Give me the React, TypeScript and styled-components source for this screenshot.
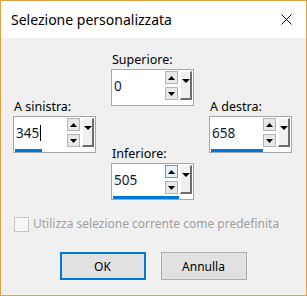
import React from "react";
import styled, { createGlobalStyle } from "styled-components";

const Global = createGlobalStyle`
  html, body { margin: 0; padding: 0; background: #ffffff; }
  body { font-family: "Noto Sans", "Open Sans", sans-serif; }
  * { box-sizing: border-box; }
`;

const Window = styled.div`
  width: 307px;
  height: 296px;
  border: 1px solid #e5a13f;
  display: flex;
  flex-direction: column;
  background: #f0f0f0;
`;

const TitleBar = styled.div`
  height: 37px;
  flex: none;
  background: #ffffff;
  display: flex;
  align-items: center;
  justify-content: space-between;
  padding: 0 14px 0 10px;
`;

const Title = styled.div`
  font-size: 14px;
  color: #000000;
  line-height: 18px;
`;

const CloseIcon = styled.svg`
  width: 11px;
  height: 11px;
  display: block;
`;

const Body = styled.div`
  flex: 1;
  display: flex;
  flex-direction: column;
  padding: 14px 12px 0 12px;
`;

const FieldsArea = styled.div`
  display: grid;
  grid-template-columns: 83px 83px 83px;
  column-gap: 15px;
  align-items: center;
`;

const CenterColumn = styled.div`
  display: flex;
  flex-direction: column;
  gap: 40px;
`;

const Field = styled.div`
  display: flex;
  flex-direction: column;
  gap: 1px;
`;

const Label = styled.div`
  font-size: 12.5px;
  line-height: 16px;
  color: #000000;
  padding-left: 1px;
`;

const SpinBox = styled.div`
  width: 83px;
  height: 37px;
  border: 1px solid #a8a8a8;
  background: #ffffff;
  display: flex;
  flex-direction: column;
  padding: 1px 1px 0 0;
`;

const InputRow = styled.div`
  height: 29px;
  display: flex;
  align-items: stretch;
`;

const Value = styled.div`
  flex: 1;
  display: flex;
  align-items: center;
  padding-left: 2px;
  font-size: 13.5px;
  color: #0f1a33;
  padding-top: 1px;
`;

const Caret = styled.span`
  display: inline-block;
  width: 1px;
  height: 16px;
  background: #000000;
  margin-left: 1px;
`;

const SpinColumn = styled.div`
  width: 13px;
  display: flex;
  flex-direction: column;
  gap: 3px;
  margin-right: 2px;
`;

const SpinButton = styled.div<{ $hover?: boolean }>`
  height: 13px;
  border: 1px solid ${(p) => (p.$hover ? "#5a9fd6" : "#b4b4b4")};
  background: ${(p) => (p.$hover ? "#e5f1fb" : "#e8e8e8")};
  display: flex;
  align-items: center;
  justify-content: center;
`;

const DropButton = styled.div`
  width: 12px;
  background: #f0f0f0;
  border-top: 1px solid #ffffff;
  border-left: 1px solid #ffffff;
  border-right: 2px solid #6d6d6d;
  border-bottom: 2px solid #6d6d6d;
  display: flex;
  justify-content: center;
  padding-top: 7px;
`;

const Bar = styled.div`
  height: 3px;
  margin: 2px 0 0 1px;
  background: #0078d7;
`;

const CheckRow = styled.div`
  display: flex;
  align-items: center;
  gap: 4px;
  margin-top: 16px;
  padding-left: 1px;
`;

const CheckBox = styled.div`
  width: 15px;
  height: 15px;
  border: 1px solid #c6c6c6;
  background: #f7f7f7;
`;

const CheckLabel = styled.div`
  font-size: 12px;
  line-height: 16px;
  color: #a0a0a0;
`;

const ButtonRow = styled.div`
  display: flex;
  justify-content: center;
  gap: 15px;
  margin-top: 20px;
  padding-right: 1px;
`;

const Button = styled.div<{ $primary?: boolean }>`
  width: 86px;
  height: 28px;
  background: #e1e1e1;
  border: ${(p) => (p.$primary ? "2px solid #0078d7" : "1px solid #adadad")};
  display: flex;
  align-items: center;
  justify-content: center;
  font-size: 12px;
  color: #000000;
`;

const Tri = ({ up, w = 7, h = 4 }: { up?: boolean; w?: number; h?: number }) => (
  <svg width={w} height={h} viewBox={`0 0 ${w} ${h}`} style={{ display: "block" }}>
    <polygon
      points={up ? `0,${h} ${w},${h} ${w / 2},0` : `0,0 ${w},0 ${w / 2},${h}`}
      fill="#000"
    />
  </svg>
);

type SpinProps = {
  label: string;
  value: string;
  bar?: number;
  caret?: boolean;
  hoverUp?: boolean;
};

const Spin = ({ label, value, bar = 0, caret, hoverUp }: SpinProps) => (
  <Field>
    <Label>{label}</Label>
    <SpinBox>
      <InputRow>
        <Value>
          {value}
          {caret && <Caret />}
        </Value>
        <SpinColumn>
          <SpinButton $hover={hoverUp}>
            <Tri up />
          </SpinButton>
          <SpinButton>
            <Tri />
          </SpinButton>
        </SpinColumn>
        <DropButton>
          <Tri w={8} h={4} />
        </DropButton>
      </InputRow>
      {bar > 0 && <Bar style={{ width: bar }} />}
    </SpinBox>
  </Field>
);

export default function App() {
  return (
    <>
      <Global />
      <Window>
        <TitleBar>
          <Title>Selezione personalizzata</Title>
          <CloseIcon viewBox="0 0 11 11">
            <path d="M0.5 0.5 L10.5 10.5 M10.5 0.5 L0.5 10.5" stroke="#000" strokeWidth="1" />
          </CloseIcon>
        </TitleBar>
        <Body>
          <FieldsArea>
            <Spin label="A sinistra:" value="345" bar={27} caret />
            <CenterColumn>
              <Spin label="Superiore:" value="0" />
              <Spin label="Inferiore:" value="505" bar={66} hoverUp />
            </CenterColumn>
            <Spin label="A destra:" value="658" bar={52} />
          </FieldsArea>
          <CheckRow>
            <CheckBox />
            <CheckLabel>Utilizza selezione corrente come predefinita</CheckLabel>
          </CheckRow>
          <ButtonRow>
            <Button $primary>OK</Button>
            <Button>Annulla</Button>
          </ButtonRow>
        </Body>
      </Window>
    </>
  );
}
